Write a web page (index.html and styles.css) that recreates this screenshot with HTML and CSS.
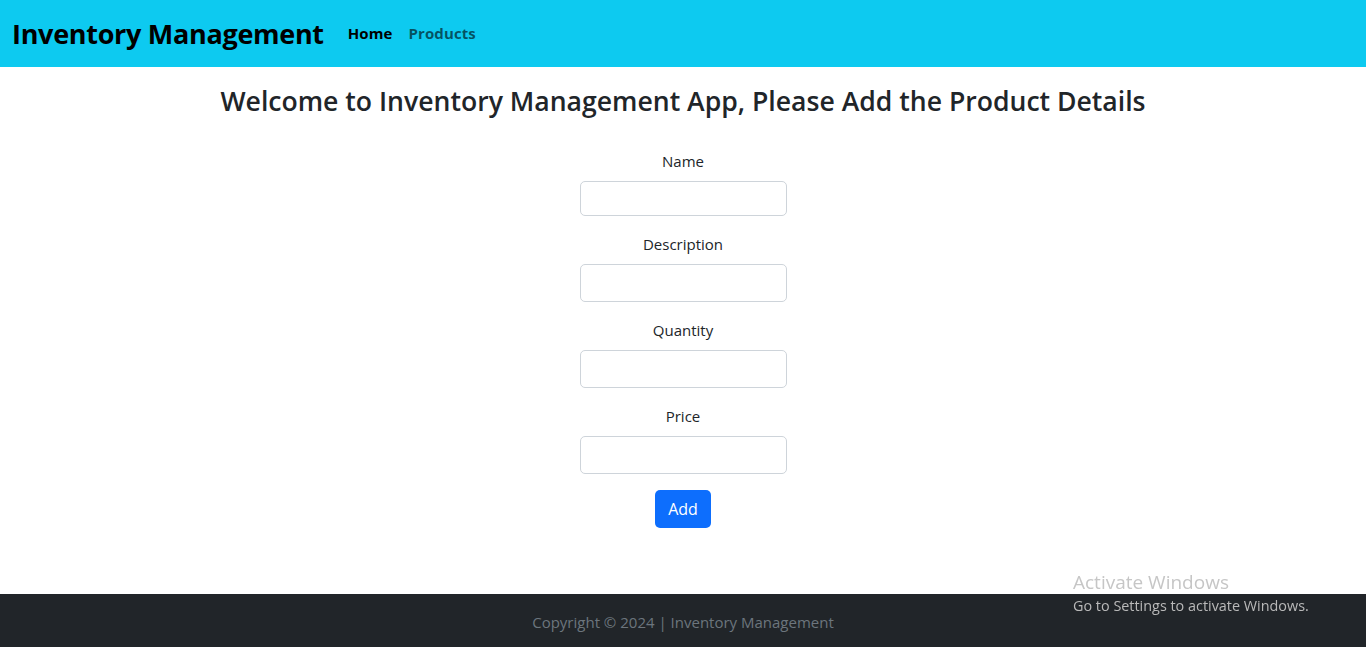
FILE: index.html
```html
<!DOCTYPE html>
<html lang="en">
<head>
<meta charset="utf-8">
<title>Inventory Management</title>
<link rel="stylesheet" href="styles.css">
</head>
<body>
<div class="page">
  <nav class="navbar">
    <a class="brand" href="#">Inventory Management</a>
    <ul class="nav">
      <li><a class="nav-link active" href="#">Home</a></li>
      <li><a class="nav-link" href="#">Products</a></li>
    </ul>
  </nav>
  <main class="content">
    <h2 class="title">Welcome to Inventory Management App, Please Add the Product Details</h2>
    <form class="form">
      <div class="field">
        <label for="name">Name</label>
        <input id="name" class="input input-first" type="text">
      </div>
      <div class="field">
        <label for="desc">Description</label>
        <input id="desc" class="input" type="text">
      </div>
      <div class="field">
        <label for="qty">Quantity</label>
        <input id="qty" class="input" type="text">
      </div>
      <div class="field">
        <label for="price">Price</label>
        <input id="price" class="input" type="text">
      </div>
      <button type="button" class="btn">Add</button>
    </form>
  </main>
  <footer class="footer">Copyright © 2024 | Inventory Management</footer>
</div>
<div class="activate">
  <div class="activate-title">Activate Windows</div>
  <div class="activate-sub">Go to Settings to activate Windows.</div>
</div>
</body>
</html>
```
FILE: styles.css
```css
* { box-sizing: border-box; }
html, body { margin: 0; padding: 0; }
body {
  font-family: "Open Sans", "Noto Sans", "Liberation Sans", sans-serif;
  font-size: 15px;
  color: #212529;
  background: #fff;
}
.page {
  min-height: 647px;
  display: flex;
  flex-direction: column;
}
.navbar {
  height: 67px;
  background: #0dcaf0;
  display: flex;
  align-items: center;
  padding: 0 12px;
}
.brand {
  font-size: 27px;
  font-weight: 700;
  color: #000;
  text-decoration: none;
  margin-right: 24px;
  letter-spacing: -0.3px;
}
.nav {
  list-style: none;
  margin: 0 0 2px;
  padding: 0;
  display: flex;
  gap: 16px;
}
.nav-link {
  font-size: 15px;
  font-weight: 700;
  text-decoration: none;
  color: rgba(0, 0, 0, 0.6);
  letter-spacing: 0.1px;
}
.nav-link.active { color: #000; }
.content {
  flex: 1;
  display: flex;
  flex-direction: column;
  align-items: center;
}
.title {
  font-size: 26.6px;
  font-weight: 600;
  margin: 16px 0 29px;
  line-height: 1.4;
}
.form {
  display: flex;
  flex-direction: column;
  align-items: center;
  gap: 16px;
}
.field {
  display: flex;
  flex-direction: column;
  align-items: center;
  gap: 8px;
}
.field label {
  font-size: 15px;
  line-height: 24px;
}
.input {
  width: 207px;
  height: 38px;
  border: 1px solid #ced4da;
  border-radius: 5px;
  font: inherit;
  padding: 6px 12px;
}
.input-first { height: 35px; }
.btn {
  width: 56px;
  height: 38px;
  border: none;
  border-radius: 5px;
  background: #0d6efd;
  color: #fff;
  font: inherit;
  font-size: 16px;
}
.footer {
  height: 53px;
  background: #212529;
  color: #6c757d;
  display: flex;
  align-items: center;
  justify-content: center;
  font-size: 15px;
  padding-top: 3px;
}
.activate {
  position: fixed;
  left: 1073px;
  top: 570px;
}
.activate-title { font-size: 19px; line-height: 25px; color: #c6c6c6; }
.activate-sub { font-size: 14.4px; line-height: 22px; color: #b9b9b9; }
```
